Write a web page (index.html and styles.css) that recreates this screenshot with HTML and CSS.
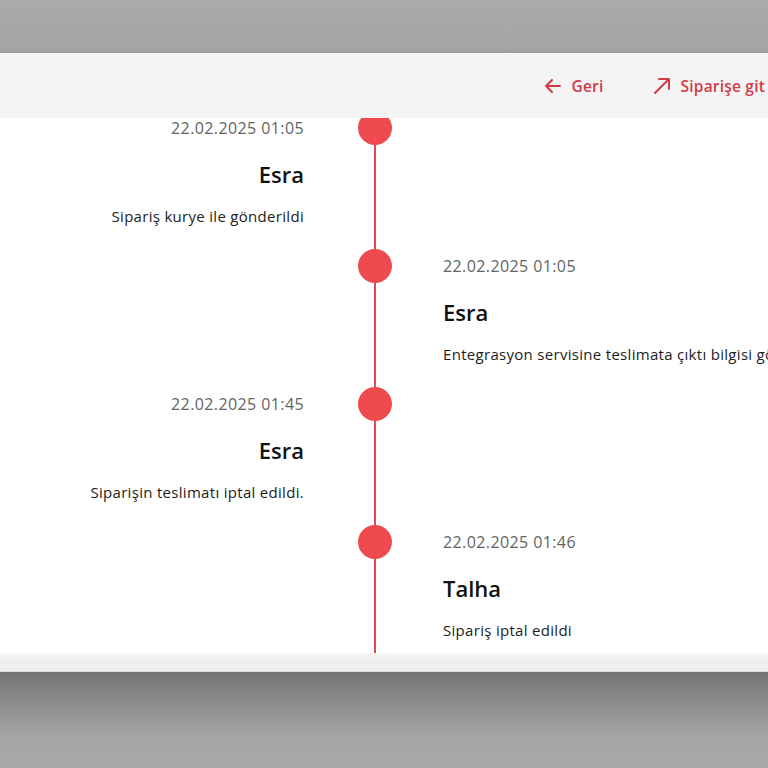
FILE: index.html
```html
<!DOCTYPE html>
<html lang="tr">
<head>
<meta charset="utf-8">
<title>Sipariş geçmişi</title>
<link rel="stylesheet" href="styles.css">
</head>
<body>
<div class="backdrop-top"></div>
<div class="modal">
  <header class="modal-header">
    <a class="head-link" href="#">
      <svg width="20" height="20" viewBox="0 0 20 20" fill="none" stroke="currentColor" stroke-width="2" stroke-linecap="round" stroke-linejoin="round"><path d="M17 10H3M9 4l-6 6 6 6"/></svg>
      <span>Geri</span>
    </a>
    <a class="head-link" href="#">
      <svg width="20" height="20" viewBox="0 0 20 20" fill="none" stroke="currentColor" stroke-width="2" stroke-linecap="round" stroke-linejoin="round"><path d="M3 17L17 3M7 3h10v10"/></svg>
      <span>Siparişe git</span>
    </a>
  </header>
  <div class="modal-body">
    <div class="timeline">
      <div class="row left">
        <div class="item"><div class="date">22.02.2025 01:05</div><div class="name">Esra</div><div class="desc">Sipariş kurye ile gönderildi</div></div>
        <div class="axis"><span class="dot"></span></div>
        <div class="empty"></div>
      </div>
      <div class="row right">
        <div class="empty"></div>
        <div class="axis"><span class="dot"></span></div>
        <div class="item"><div class="date">22.02.2025 01:05</div><div class="name">Esra</div><div class="desc">Entegrasyon servisine teslimata çıktı bilgisi gönderildi</div></div>
      </div>
      <div class="row left">
        <div class="item"><div class="date">22.02.2025 01:45</div><div class="name">Esra</div><div class="desc">Siparişin teslimatı iptal edildi.</div></div>
        <div class="axis"><span class="dot"></span></div>
        <div class="empty"></div>
      </div>
      <div class="row right">
        <div class="empty"></div>
        <div class="axis"><span class="dot"></span></div>
        <div class="item"><div class="date">22.02.2025 01:46</div><div class="name">Talha</div><div class="desc">Sipariş iptal edildi</div></div>
      </div>
    </div>
  </div>
  <div class="modal-footer"></div>
</div>
<div class="backdrop-bottom"></div>
</body>
</html>
```
FILE: styles.css
```css
* { box-sizing: border-box; }
html, body { margin: 0; padding: 0; }
body {
  width: 768px;
  height: 768px;
  overflow: hidden;
  font-family: "Open Sans", "Noto Sans", sans-serif;
  background: #a8a8a8;
}
.backdrop-top {
  height: 53px;
  background: linear-gradient(#aaaaaa, #a5a5a5 90%, #9c9c9c);
}
.modal {
  display: flex;
  flex-direction: column;
}
.modal-header {
  height: 65px;
  background: #f4f4f4;
  display: flex;
  justify-content: flex-end;
  align-items: center;
  gap: 48px;
  padding-right: 3px;
}
.head-link {
  display: flex;
  align-items: center;
  gap: 9px;
  color: #d23a48;
  text-decoration: none;
  font-size: 15.5px;
  font-weight: 600;
  letter-spacing: 0.2px;
}
.modal-body {
  height: 535px;
  background: #fff;
  overflow: hidden;
}
.timeline {
  margin-top: -7px;
}
.row {
  display: grid;
  grid-template-columns: 304px 142px 1fr;
  height: 138px;
}
.axis {
  display: flex;
  justify-content: center;
  align-items: flex-start;
  margin-left: 54px;
  margin-right: 54px;
  background: linear-gradient(to right, transparent 15.5px, #e04a55 15.5px, #e04a55 18.5px, transparent 18.5px);
}
.dot {
  width: 34px;
  height: 34px;
  border-radius: 50%;
  background: #ee4a4f;
}
.row.right .item { margin-left: -3px; min-width: 0; overflow: hidden; }
.row.left .item { text-align: right; }
.date {
  height: 34px;
  line-height: 34px;
  font-size: 16px;
  color: #636363;
  font-weight: 500;
  letter-spacing: 0.4px;
}
.name {
  margin-top: 15px;
  height: 28px;
  line-height: 28px;
  font-size: 22px;
  font-weight: 600;
  color: #111;
  letter-spacing: 0;
}
.desc {
  margin-top: 18px;
  height: 20px;
  line-height: 20px;
  font-size: 15px;
  font-weight: 500;
  color: #1c1c1c;
  white-space: nowrap;
  letter-spacing: 0.3px;
}
.modal-footer {
  height: 19px;
  background: linear-gradient(#f7f7f7, #efefef 40%, #efefef);
  border-bottom: 1px solid #dcdcdc;
}
.backdrop-bottom {
  height: 96px;
  background: linear-gradient(#737373, #8f8f8f 35%, #a6a6a6 70%, #a9a9a9);
}
```
